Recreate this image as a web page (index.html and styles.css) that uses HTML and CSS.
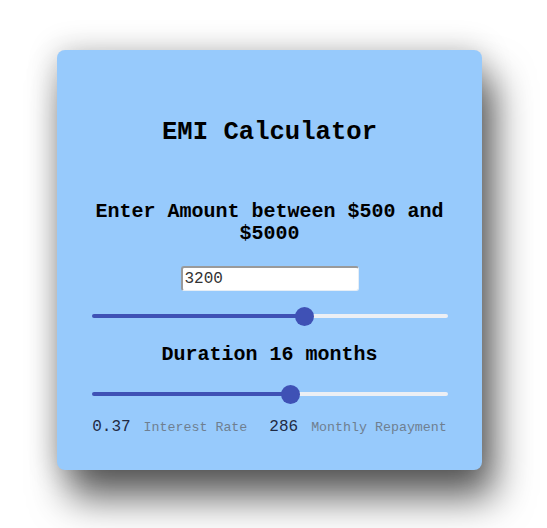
FILE: index.html
```html
<!DOCTYPE html>
<html>
<head>
<meta charset="utf-8">
<link rel="stylesheet" href="styles.css">
</head>
<body>
<div class="page">
  <div class="card">
    <h1 class="title">EMI Calculator</h1>
    <h2 class="label amount-label">Enter Amount between $500 and $5000</h2>
    <input class="amount" type="text" value="3200">
    <input class="slider slider-amount" type="range" min="500" max="5000" step="any" value="3222">
    <h2 class="label duration-label">Duration 16 months</h2>
    <input class="slider slider-duration" type="range" min="6" max="24" step="any" value="16.12">
    <div class="results">
      <span class="value">0.37</span><span class="caption">Interest Rate</span>
      <span class="value value-second">286</span><span class="caption">Monthly Repayment</span>
    </div>
  </div>
</div>
</body>
</html>
```

FILE: styles.css
```css
html, body {
  margin: 0;
  padding: 0;
  background: #ffffff;
}
.page {
  padding: 50px 0 58px 57px;
}
.card {
  box-sizing: border-box;
  width: 425px;
  height: 420px;
  background: #97cafc;
  border-radius: 8px;
  box-shadow: 0 0 30px rgba(0, 0, 0, 0.22), 12px 28px 38px rgba(0, 0, 0, 0.62);
  display: flex;
  flex-direction: column;
  align-items: center;
  padding: 68px 34px 0 34px;
  font-family: "Liberation Mono", "Courier New", monospace;
  color: #000;
}
.title {
  margin: 0;
  font-size: 25.6px;
  line-height: 30px;
  font-weight: bold;
}
.label {
  margin: 0;
  font-size: 20px;
  line-height: 22px;
  font-weight: bold;
  text-align: center;
}
.amount-label {
  margin-top: 53px;
  width: 356px;
}
.amount {
  margin-top: 21px;
  box-sizing: border-box;
  width: 178px;
  height: 25px;
  padding: 0 0 0 2px;
  border-style: solid;
  border-width: 2px 1px 1px 2px;
  border-color: #9a9a9a #e6eef6 #e6eef6 #9a9a9a;
  border-radius: 3px;
  background: #fff;
  font-family: "Liberation Mono", "Courier New", monospace;
  font-size: 16px;
  color: #333;
  outline: none;
}
.slider {
  -webkit-appearance: none;
  appearance: none;
  width: 356px;
  height: 4px;
  border-radius: 2px;
  margin: 0;
  outline: none;
}
.slider::-webkit-slider-thumb {
  -webkit-appearance: none;
  appearance: none;
  width: 19px;
  height: 19px;
  border-radius: 50%;
  background: #3f51b5;
  border: none;
}
.slider-amount {
  margin-top: 23px;
  background: linear-gradient(to right, #3f51b5 0, #3f51b5 60%, #eceff4 60%, #eceff4 100%);
}
.duration-label {
  margin-top: 26px;
}
.slider-duration {
  margin-top: 26px;
  background: linear-gradient(to right, #3f51b5 0, #3f51b5 56%, #eceff4 56%, #eceff4 100%);
}
.results {
  margin-top: 22px;
  display: flex;
  align-items: baseline;
  line-height: 18px;
}
.value {
  font-size: 16px;
  color: #1f2a44;
}
.value-second {
  margin-left: 22px;
}
.caption {
  font-size: 13.3px;
  color: #6f7f90;
  margin-left: 13px;
}
```
